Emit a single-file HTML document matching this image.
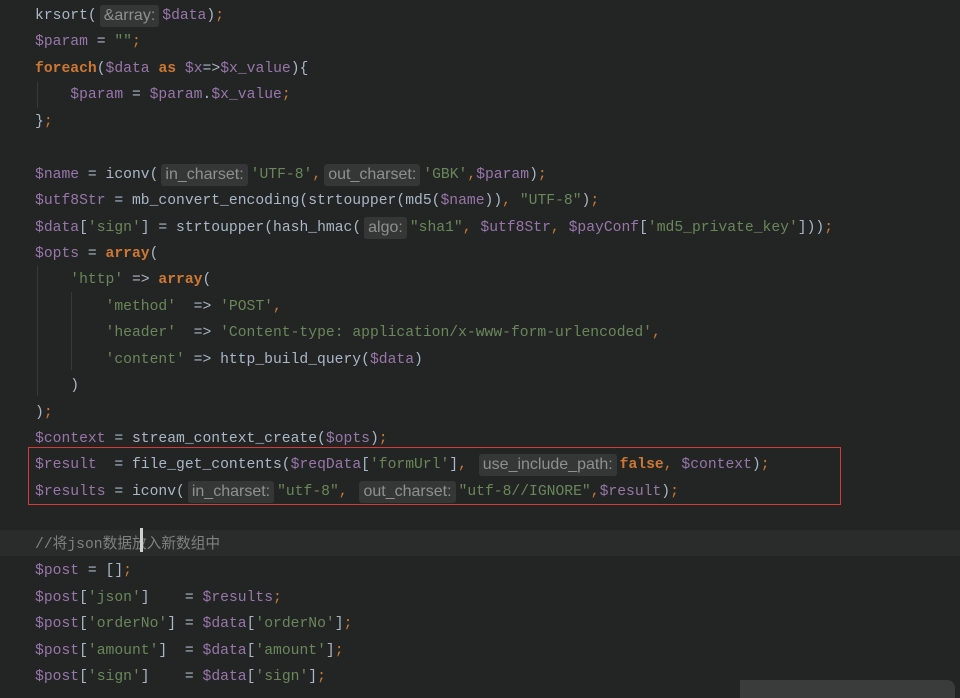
<!DOCTYPE html>
<html><head><meta charset="utf-8"><style>
html,body{margin:0;padding:0;}
body{width:960px;height:698px;background:#232525;overflow:hidden;position:relative;}
.code{position:absolute;left:35px;top:3px;font-family:"Liberation Mono","Noto Sans CJK SC",monospace;font-size:14.7px;color:#a9b7c6;}
.l{height:26.45px;line-height:26.45px;position:relative;white-space:pre;overflow:visible;}
.v{color:#9876aa}.k{color:#cc7832;font-weight:bold}.s{color:#6a8759}.p{color:#cc7832}.c{color:#808080}
.h{display:inline-block;vertical-align:top;margin-top:2px;font-family:"Liberation Sans",sans-serif;font-size:16px;color:#8f8f8f;background:#353737;border-radius:3px;padding:0 4px;margin-left:3px;margin-right:3px;line-height:22px;height:22px;}
.cur{position:absolute;left:140px;top:528px;width:3px;height:24px;background:#d0d0d0;}
.hl{position:absolute;left:0;top:530px;width:960px;height:26px;background:#2a2c2c;}
.box{position:absolute;left:28px;top:447px;width:811px;height:56px;border:1.5px solid #d33a3a;}
.g{position:absolute;width:1px;background:#373939;}
</style></head><body>
<div class="hl"></div>
<div class="g" style="left:37px;top:82px;height:26px"></div>
<div class="g" style="left:37px;top:266px;height:130px"></div>
<div class="g" style="left:71px;top:292px;height:78px"></div>
<div class="code"><div class="l">krsort(<span class="h">&amp;array:</span><span class="v">$data</span>)<span class="p">;</span></div><div class="l"><span class="v">$param</span> = <span class="s">""</span><span class="p">;</span></div><div class="l"><span class="k">foreach</span>(<span class="v">$data</span> <span class="k">as</span> <span class="v">$x</span>=&gt;<span class="v">$x_value</span>){</div><div class="l">    <span class="v">$param</span> = <span class="v">$param</span>.<span class="v">$x_value</span><span class="p">;</span></div><div class="l">}<span class="p">;</span></div><div class="l"> </div><div class="l"><span class="v">$name</span> = iconv(<span class="h">in_charset:</span><span class="s">'UTF-8'</span><span class="p">,</span><span class="h">out_charset:</span><span class="s">'GBK'</span><span class="p">,</span><span class="v">$param</span>)<span class="p">;</span></div><div class="l"><span class="v">$utf8Str</span> = mb_convert_encoding(strtoupper(md5(<span class="v">$name</span>))<span class="p">,</span> <span class="s">"UTF-8"</span>)<span class="p">;</span></div><div class="l"><span class="v">$data</span>[<span class="s">'sign'</span>] = strtoupper(hash_hmac(<span class="h">algo:</span><span class="s">"sha1"</span><span class="p">,</span> <span class="v">$utf8Str</span><span class="p">,</span> <span class="v">$payConf</span>[<span class="s">'md5_private_key'</span>]))<span class="p">;</span></div><div class="l"><span class="v">$opts</span> = <span class="k">array</span>(</div><div class="l">    <span class="s">'http'</span> =&gt; <span class="k">array</span>(</div><div class="l">        <span class="s">'method'</span>  =&gt; <span class="s">'POST'</span><span class="p">,</span></div><div class="l">        <span class="s">'header'</span>  =&gt; <span class="s">'Content-type: application/x-www-form-urlencoded'</span><span class="p">,</span></div><div class="l">        <span class="s">'content'</span> =&gt; http_build_query(<span class="v">$data</span>)</div><div class="l">    )</div><div class="l">)<span class="p">;</span></div><div class="l"><span class="v">$context</span> = stream_context_create(<span class="v">$opts</span>)<span class="p">;</span></div><div class="l"><span class="v">$result</span>  = file_get_contents(<span class="v">$reqData</span>[<span class="s">'formUrl'</span>]<span class="p">,</span> <span class="h">use_include_path:</span><span class="k">false</span><span class="p">,</span> <span class="v">$context</span>)<span class="p">;</span></div><div class="l"><span class="v">$results</span> = iconv(<span class="h">in_charset:</span><span class="s">"utf-8"</span><span class="p">,</span> <span class="h">out_charset:</span><span class="s">"utf-8//IGNORE"</span><span class="p">,</span><span class="v">$result</span>)<span class="p">;</span></div><div class="l"> </div><div class="l"><span class="c">//将json数据放入新数组中</span></div><div class="l"><span class="v">$post</span> = []<span class="p">;</span></div><div class="l"><span class="v">$post</span>[<span class="s">'json'</span>]    = <span class="v">$results</span><span class="p">;</span></div><div class="l"><span class="v">$post</span>[<span class="s">'orderNo'</span>] = <span class="v">$data</span>[<span class="s">'orderNo'</span>]<span class="p">;</span></div><div class="l"><span class="v">$post</span>[<span class="s">'amount'</span>]  = <span class="v">$data</span>[<span class="s">'amount'</span>]<span class="p">;</span></div><div class="l"><span class="v">$post</span>[<span class="s">'sign'</span>]    = <span class="v">$data</span>[<span class="s">'sign'</span>]<span class="p">;</span></div></div>
<div class="cur"></div>
<div class="box"></div>
<div style="position:absolute;left:740px;top:680px;width:215px;height:18px;background:#3a3c3b;border-radius:0 8px 0 0"></div>
</body></html>
